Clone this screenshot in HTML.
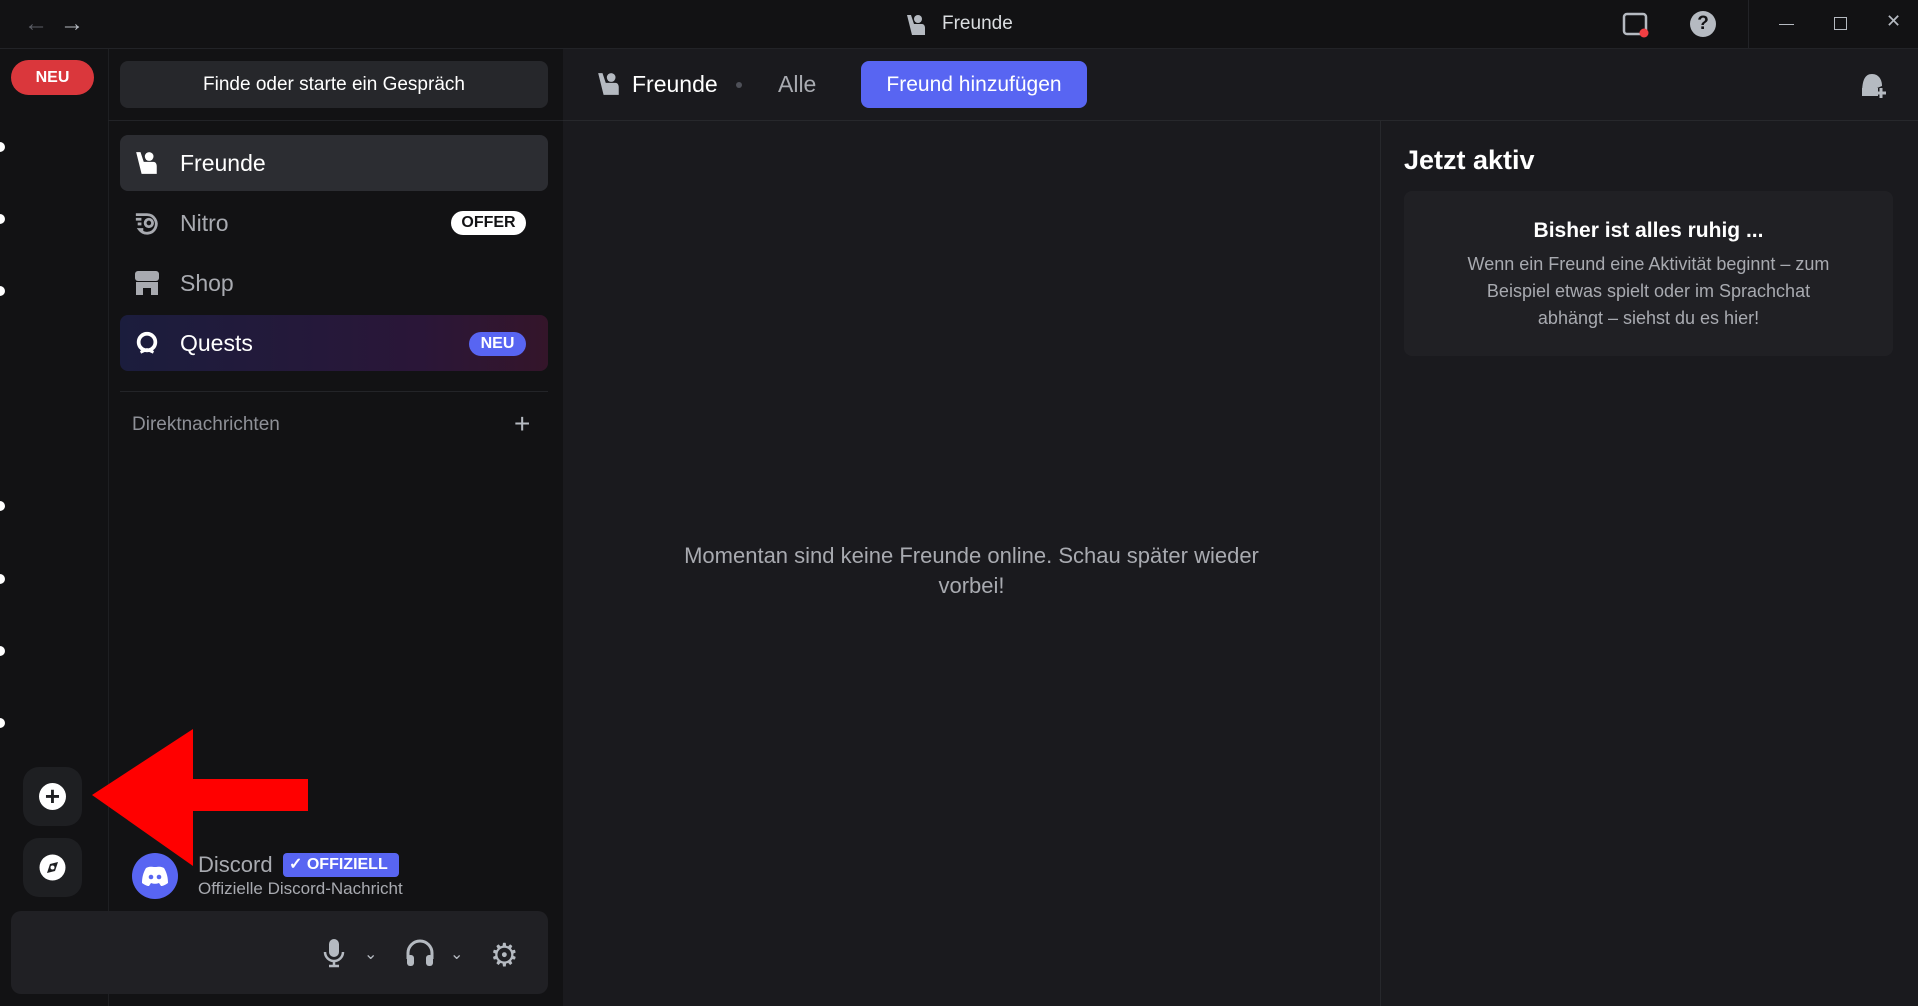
<!DOCTYPE html><html><head><meta charset="utf-8"><style>
*{box-sizing:border-box;margin:0;padding:0}
body{width:1918px;height:1006px;background:#121214;font-family:"Liberation Sans",sans-serif;color:#dbdee1;position:relative;overflow:hidden}
.a{position:absolute}
.side{left:108px;top:49px;width:455px;height:957px;background:#121214;border-left:1px solid #1e1f22}
.main{left:563px;top:49px;width:1355px;height:957px;background:#1a1a1e}
.item{left:120px;width:428px;height:56px;border-radius:8px;display:flex;align-items:center;padding-left:14px;font-size:23px;color:#a8aab0}
.item svg{margin-right:20px}
.dot{left:-5px;width:10px;height:10px;border-radius:5px;background:#fff}
</style></head><body>
<div class="a" style="left:0;top:0;width:1918px;height:49px;background:#121214;border-bottom:1px solid #222327"></div>
<div class="a" style="left:24px;top:10px;font-size:24px;color:#5c5e66">←</div>
<div class="a" style="left:60px;top:10px;font-size:24px;color:#b5bac1">→</div>
<svg class="a" style="left:904px;top:12px" width="24" height="26" viewBox="0 0 24 24"><circle cx="14" cy="6" r="4" fill="#b5bac1"/><path d="M3 2l4 0 3 9h8c2 0 3 2 3 4v7H8z" fill="#b5bac1"/></svg>
<div class="a" style="left:942px;top:13px;font-size:19px;color:#dbdee1">Freunde</div>
<svg class="a" style="left:1622px;top:12px" width="28" height="26"><rect x="2" y="2" width="22" height="20" rx="3" fill="none" stroke="#b5bac1" stroke-width="2.5"/><circle cx="22" cy="21" r="4.5" fill="#f23f43"/></svg>
<div class="a" style="left:1690px;top:11px;width:26px;height:26px;border-radius:13px;background:#b5bac1;color:#121214;font-weight:bold;text-align:center;font-size:19px;line-height:26px">?</div>
<div class="a" style="left:1748px;top:0;width:1px;height:48px;background:#222327"></div>
<div class="a" style="left:1779px;top:24px;width:15px;height:1px;background:#b5bac1"></div>
<div class="a" style="left:1834px;top:17px;width:13px;height:13px;border:1px solid #b5bac1"></div>
<div class="a" style="left:1886px;top:11px;font-size:18px;color:#b5bac1">✕</div>
<div class="a" style="left:11px;top:60px;width:83px;height:35px;border-radius:18px;background:#da373c;color:#fff;font-weight:bold;font-size:16px;text-align:center;line-height:35px">NEU</div>
<div class="a dot" style="top:142px"></div><div class="a dot" style="top:214px"></div><div class="a dot" style="top:286px"></div>
<div class="a dot" style="top:501px"></div><div class="a dot" style="top:574px"></div><div class="a dot" style="top:646px"></div><div class="a dot" style="top:718px"></div>
<div class="a" style="left:23px;top:767px;width:59px;height:59px;border-radius:16px;background:#1e1f22"></div>
<div class="a" style="left:39px;top:783px;width:27px;height:27px;border-radius:14px;background:#fff;color:#1e1f22;font-size:26px;line-height:26px;text-align:center;font-weight:bold">+</div>
<div class="a" style="left:23px;top:838px;width:59px;height:59px;border-radius:16px;background:#1e1f22"></div>
<svg class="a" style="left:39px;top:854px" width="27" height="27"><circle cx="13.5" cy="13.5" r="13" fill="#fff"/><path d="M19 8l-3 9-8 2 3-9z" fill="#1e1f22"/><circle cx="13.5" cy="13.5" r="2" fill="#fff"/></svg>
<div class="a side"></div>
<div class="a" style="left:120px;top:61px;width:428px;height:47px;border-radius:8px;background:#26272b;color:#fff;font-size:19px;text-align:center;line-height:47px">Finde oder starte ein Gespräch</div>
<div class="a" style="left:108px;top:120px;width:455px;height:1px;background:#222327"></div>
<div class="a item" style="top:135px;background:#2c2d32;color:#fff"><svg width="26" height="26" viewBox="0 0 24 24"><circle cx="14" cy="6" r="4" fill="#fff"/><path d="M2 2h4l3 9h9c2 0 3 2 3 4v7H7z" fill="#fff"/></svg>Freunde</div>
<div class="a item" style="top:195px"><svg width="26" height="26" viewBox="0 0 28 26"><path d="M2 4h12a10 10 0 1 1-8 16h4M2 9h6M4 14h4" fill="none" stroke="#a8aab0" stroke-width="3"/><circle cx="16" cy="13" r="4" fill="none" stroke="#a8aab0" stroke-width="3"/></svg>Nitro</div>
<div class="a" style="left:451px;top:211px;width:75px;height:24px;border-radius:12px;background:#fff;color:#121214;font-weight:bold;font-size:16px;text-align:center;line-height:24px">OFFER</div>
<div class="a item" style="top:255px"><svg width="26" height="26" viewBox="0 0 26 26"><rect x="1" y="1" width="24" height="10" rx="3" fill="#a8aab0"/><path d="M2 12h22v13h-7v-7h-8v7H2z" fill="#a8aab0"/></svg>Shop</div>
<div class="a item" style="top:315px;background:linear-gradient(90deg,#1b1d3d,#2a1638 70%,#34152a);color:#fff"><svg width="26" height="28" viewBox="0 0 28 28"><circle cx="14" cy="13" r="9" fill="none" stroke="#fff" stroke-width="4"/><path d="M7 24l7-3 7 3" stroke="#fff" stroke-width="3" fill="none"/></svg>Quests</div>
<div class="a" style="left:469px;top:332px;width:57px;height:24px;border-radius:12px;background:#5865f2;color:#fff;font-weight:bold;font-size:16px;text-align:center;line-height:24px">NEU</div>
<div class="a" style="left:120px;top:391px;width:428px;height:1px;background:#232428"></div>
<div class="a" style="left:132px;top:414px;font-size:19px;color:#8e9097">Direktnachrichten</div>
<div class="a" style="left:514px;top:408px;font-size:28px;color:#b5bac1;font-weight:300">+</div>
<div class="a" style="left:132px;top:853px;width:46px;height:46px;border-radius:23px;background:#5865f2"></div>
<svg class="a" style="left:141px;top:866px" width="28" height="20" viewBox="0 0 28 20"><path d="M5 2c4-2 6-1 9-1s5-1 9 1c3 5 4 10 4 15-3 2-5 3-7 3l-2-3c-3 1-5 1-8 0l-2 3c-2 0-4-1-7-3 0-5 1-10 4-15z" fill="#fff"/><circle cx="10" cy="11" r="2.3" fill="#5865f2"/><circle cx="18" cy="11" r="2.3" fill="#5865f2"/></svg>
<div class="a" style="left:198px;top:852px;font-size:22px;color:#a8aab0">Discord</div>
<div class="a" style="left:283px;top:853px;width:116px;height:24px;border-radius:4px;background:#5865f2;color:#fff;font-weight:bold;font-size:16px;line-height:24px;padding-left:6px">✓ OFFIZIELL</div>
<div class="a" style="left:198px;top:879px;font-size:17px;color:#a8aab0">Offizielle Discord-Nachricht</div>
<div class="a" style="left:11px;top:911px;width:537px;height:83px;border-radius:10px;background:#202024"></div>
<svg class="a" style="left:322px;top:938px" width="24" height="30" viewBox="0 0 24 30"><rect x="7" y="1" width="10" height="18" rx="5" fill="#b5bac1"/><path d="M3 14a9 9 0 0 0 18 0M12 23v5M7 28h10" stroke="#b5bac1" stroke-width="2.5" fill="none"/></svg>
<div class="a" style="left:364px;top:944px;font-size:16px;color:#b5bac1">⌄</div>
<svg class="a" style="left:405px;top:939px" width="30" height="28" viewBox="0 0 30 28"><path d="M3 20v-6a12 12 0 0 1 24 0v6" stroke="#b5bac1" stroke-width="3" fill="none"/><rect x="2" y="16" width="7" height="11" rx="3" fill="#b5bac1"/><rect x="21" y="16" width="7" height="11" rx="3" fill="#b5bac1"/></svg>
<div class="a" style="left:450px;top:944px;font-size:16px;color:#b5bac1">⌄</div>
<div class="a" style="left:490px;top:936px;font-size:32px;color:#b5bac1">⚙</div>
<div class="a main"></div>
<div class="a" style="left:563px;top:120px;width:1355px;height:1px;background:#27282c"></div>
<div class="a" style="left:1380px;top:120px;width:1px;height:886px;background:#27282c"></div>
<svg class="a" style="left:596px;top:70px" width="26" height="28" viewBox="0 0 24 24"><circle cx="14" cy="6" r="4" fill="#b5bac1"/><path d="M2 2h4l3 9h9c2 0 3 2 3 4v7H7z" fill="#b5bac1"/></svg>
<div class="a" style="left:632px;top:71px;font-size:23px;color:#fff">Freunde</div>
<div class="a" style="left:736px;top:82px;width:6px;height:6px;border-radius:3px;background:#4e5058"></div>
<div class="a" style="left:778px;top:71px;font-size:23px;color:#a8aab0">Alle</div>
<div class="a" style="left:861px;top:61px;width:226px;height:47px;border-radius:8px;background:#5865f2;color:#fff;font-size:21px;text-align:center;line-height:47px">Freund hinzufügen</div>
<svg class="a" style="left:1858px;top:70px" width="30" height="30" viewBox="0 0 30 30"><path d="M4 24c0-14 3-20 10-20s10 6 10 12" fill="#b5bac1"/><rect x="4" y="18" width="16" height="8" fill="#b5bac1"/><path d="M23 18v10M18 23h10" stroke="#b5bac1" stroke-width="3"/></svg>
<div class="a" style="left:563px;top:541px;width:817px;text-align:center;font-size:22px;line-height:30px;color:#a8aab0">Momentan sind keine Freunde online. Schau später wieder<br>vorbei!</div>
<div class="a" style="left:1404px;top:145px;font-size:27px;font-weight:bold;color:#fff">Jetzt aktiv</div>
<div class="a" style="left:1404px;top:191px;width:489px;height:165px;border-radius:8px;background:#202024;text-align:center">
<div style="margin-top:28px;font-size:21px;font-weight:bold;color:#fff">Bisher ist alles ruhig ...</div>
<div style="margin:8px 40px 0;font-size:18px;line-height:27px;color:#a8aab0">Wenn ein Freund eine Aktivität beginnt – zum<br>Beispiel etwas spielt oder im Sprachchat<br>abhängt – siehst du es hier!</div></div>
<svg class="a" style="left:0;top:0" width="400" height="1006"><polygon points="92,795 193,729 193,779 308,779 308,811 193,811 193,866" fill="#ff0000"/></svg>
</body></html>
